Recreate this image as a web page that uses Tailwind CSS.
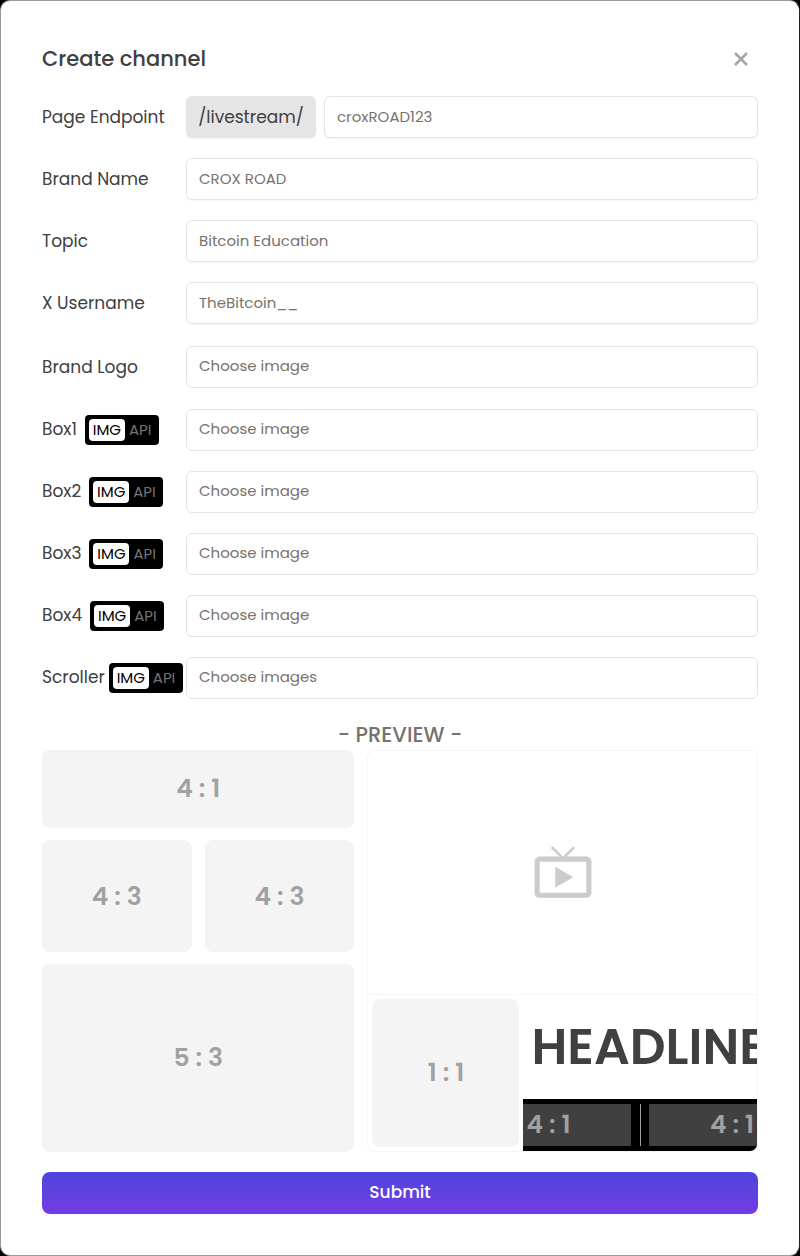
<!DOCTYPE html>
<html lang="en">

<head>
    <meta charset="UTF-8">
    <meta name="viewport" content="width=device-width, initial-scale=1.0">
    <title>Create channel</title>
    <script src="https://cdn.jsdelivr.net/npm/@tailwindcss/browser@4"></script>
</head>

<body class="bg-black font-['Poppins','Inter',sans-serif] text-neutral-700">
    <!--Modal-->
    <main class="min-h-screen bg-white border border-[#999] border-r-[#222] rounded-[10px] px-[41px] pt-[40px] pb-[40px]">
        <div class="flex items-center justify-between h-9">
            <h1 class="text-[21px] font-medium">Create channel</h1>
            <button type="button" aria-label="Close" class="p-2 text-[#a6a6a6]">
                <svg class="w-[18px] h-[18px]" viewBox="0 0 18 18" fill="none" stroke="currentColor" stroke-width="2.6">
                    <path d="M3 3l12 12M15 3L3 15" />
                </svg>
            </button>
        </div>

        <form class="mt-[19px]">
            <!--Text fields-->
            <div class="space-y-5">
                <div class="flex items-center">
                    <label for="endpoint" class="w-36 shrink-0 pt-0.5 text-[17px]">Page Endpoint</label>
                    <span class="flex items-center justify-center w-[130px] h-[42px] mr-2 pt-0.5 shrink-0 rounded-md bg-[#e5e5e5] text-[17px] shadow-xs">/livestream/</span>
                    <input type="text" id="endpoint" placeholder="croxROAD123" class="grow min-w-0 h-[42px] px-3 pb-0.5 rounded-md border border-neutral-200 shadow-xs text-[15px] placeholder:text-stone-500" />
                </div>
                <div class="flex items-center">
                    <label for="brand" class="w-36 shrink-0 pt-0.5 text-[17px]">Brand Name</label>
                    <input type="text" id="brand" placeholder="CROX ROAD" class="grow min-w-0 h-[42px] px-3 pb-0.5 rounded-md border border-neutral-200 shadow-xs text-[15px] placeholder:text-stone-500" />
                </div>
                <div class="flex items-center">
                    <label for="topic" class="w-36 shrink-0 pt-0.5 text-[17px]">Topic</label>
                    <input type="text" id="topic" placeholder="Bitcoin Education" class="grow min-w-0 h-[42px] px-3 pb-0.5 rounded-md border border-neutral-200 shadow-xs text-[15px] placeholder:text-stone-500" />
                </div>
                <div class="flex items-center">
                    <label for="username" class="w-36 shrink-0 pt-0.5 text-[17px]">X Username</label>
                    <input type="text" id="username" placeholder="TheBitcoin__" class="grow min-w-0 h-[42px] px-3 pb-0.5 rounded-md border border-neutral-200 shadow-xs text-[15px] placeholder:text-stone-500" />
                </div>
            </div>

            <!--Logo-->
            <div class="flex items-center mt-[22px]">
                <label for="logo" class="w-36 shrink-0 pt-0.5 text-[17px]">Brand Logo</label>
                <label class="relative flex items-center grow h-[42px] px-3 pb-0.5 rounded-md border border-neutral-200 text-[15px] text-stone-500">
                    <input type="file" id="logo" class="sr-only" />Choose image
                </label>
            </div>

            <!--Boxes, image or API-->
            <div class="mt-[21px] space-y-5">
                <div class="flex items-center">
                    <div class="flex items-center gap-2 w-36 shrink-0">
                        <label for="box1" class="text-[17px]">Box1</label>
                        <div class="flex items-center w-[74px] h-[30px] p-1 gap-1 rounded bg-black text-[15px]">
                            <button type="button" class="w-9 h-[22px] rounded bg-white text-black leading-[22px]">IMG</button>
                            <button type="button" class="text-neutral-500 leading-[22px]">API</button>
                        </div>
                    </div>
                    <label class="relative flex items-center grow h-[42px] px-3 pb-0.5 rounded-md border border-neutral-200 text-[15px] text-stone-500">
                        <input type="file" id="box1" class="sr-only" />Choose image
                    </label>
                </div>
                <div class="flex items-center">
                    <div class="flex items-center gap-2 w-36 shrink-0">
                        <label for="box2" class="text-[17px]">Box2</label>
                        <div class="flex items-center w-[74px] h-[30px] p-1 gap-1 rounded bg-black text-[15px]">
                            <button type="button" class="w-9 h-[22px] rounded bg-white text-black leading-[22px]">IMG</button>
                            <button type="button" class="text-neutral-500 leading-[22px]">API</button>
                        </div>
                    </div>
                    <label class="relative flex items-center grow h-[42px] px-3 pb-0.5 rounded-md border border-neutral-200 text-[15px] text-stone-500">
                        <input type="file" id="box2" class="sr-only" />Choose image
                    </label>
                </div>
                <div class="flex items-center">
                    <div class="flex items-center gap-2 w-36 shrink-0">
                        <label for="box3" class="text-[17px]">Box3</label>
                        <div class="flex items-center w-[74px] h-[30px] p-1 gap-1 rounded bg-black text-[15px]">
                            <button type="button" class="w-9 h-[22px] rounded bg-white text-black leading-[22px]">IMG</button>
                            <button type="button" class="text-neutral-500 leading-[22px]">API</button>
                        </div>
                    </div>
                    <label class="relative flex items-center grow h-[42px] px-3 pb-0.5 rounded-md border border-neutral-200 text-[15px] text-stone-500">
                        <input type="file" id="box3" class="sr-only" />Choose image
                    </label>
                </div>
                <div class="flex items-center">
                    <div class="flex items-center gap-2 w-36 shrink-0">
                        <label for="box4" class="text-[17px]">Box4</label>
                        <div class="flex items-center w-[74px] h-[30px] p-1 gap-1 rounded bg-black text-[15px]">
                            <button type="button" class="w-9 h-[22px] rounded bg-white text-black leading-[22px]">IMG</button>
                            <button type="button" class="text-neutral-500 leading-[22px]">API</button>
                        </div>
                    </div>
                    <label class="relative flex items-center grow h-[42px] px-3 pb-0.5 rounded-md border border-neutral-200 text-[15px] text-stone-500">
                        <input type="file" id="box4" class="sr-only" />Choose image
                    </label>
                </div>
                <div class="flex items-center">
                    <div class="flex items-center gap-1 w-36 shrink-0">
                        <label for="scroller" class="text-[17px]">Scroller</label>
                        <div class="flex items-center w-[74px] h-[30px] p-1 gap-1 rounded bg-black text-[15px]">
                            <button type="button" class="w-9 h-[22px] rounded bg-white text-black leading-[22px]">IMG</button>
                            <button type="button" class="text-neutral-500 leading-[22px]">API</button>
                        </div>
                    </div>
                    <label class="relative flex items-center grow h-[42px] px-3 pb-0.5 rounded-md border border-neutral-200 text-[15px] text-stone-500">
                        <input type="file" id="scroller" multiple class="sr-only" />Choose images
                    </label>
                </div>
            </div>

            <!--Preview-->
            <h2 class="mt-5 h-[31px] leading-8 text-center text-[21px] font-medium text-stone-500">- PREVIEW -</h2>
            <div class="grid grid-cols-[4fr_5fr] gap-[13px] text-[25px] font-semibold text-neutral-400">
                <div class="grid grid-cols-2 gap-x-[13px] gap-y-3 content-start">
                    <div class="col-span-2 flex items-center justify-center aspect-[4/1] rounded-lg bg-[#f4f4f4]">4 : 1</div>
                    <div class="flex items-center justify-center aspect-[4/3] rounded-lg bg-[#f4f4f4]">4 : 3</div>
                    <div class="flex items-center justify-center aspect-[4/3] rounded-lg bg-[#f4f4f4]">4 : 3</div>
                    <div class="col-span-2 flex items-center justify-center aspect-[5/3] rounded-lg bg-[#f4f4f4]">5 : 3</div>
                </div>
                <div class="flex flex-col min-w-0 rounded-lg border border-neutral-100 overflow-hidden">
                    <div class="grow flex items-center justify-center border-b border-neutral-100">
                        <svg class="w-[62px] h-[62px] text-[#cccccc]" viewBox="0 0 24 24" fill="currentColor">
                            <path d="M21 6h-7.59l3.29-3.29L16 2l-4 4-4-4-.71.71L10.59 6H3c-1.1 0-2 .89-2 2v12c0 1.1.9 2 2 2h18c1.1 0 2-.9 2-2V8c0-1.11-.9-2-2-2zm0 14H3V8h18v12zM9 10v8l7-4z" />
                        </svg>
                    </div>
                    <div class="flex h-[156px]">
                        <div class="flex items-center justify-center w-[147px] h-[148px] m-1 shrink-0 rounded-lg bg-[#f4f4f4]">1 : 1</div>
                        <div class="flex flex-col grow min-w-0">
                            <div class="grow flex items-center pl-2 overflow-hidden text-[50px] text-neutral-700 whitespace-nowrap">HEADLINE</div>
                            <!--Ticker strip-->
                            <div class="flex justify-between h-[52px] py-[5px] bg-black overflow-hidden">
                                <div class="flex items-center w-[108px] pl-[3px] bg-neutral-700 whitespace-nowrap">4 : 1</div>
                                <div class="w-px bg-neutral-400"></div>
                                <div class="flex items-center justify-end w-[108px] pr-[3px] bg-neutral-700 whitespace-nowrap">4 : 1</div>
                            </div>
                        </div>
                    </div>
                </div>
            </div>

            <button type="submit" class="w-full h-[42px] mt-5 rounded-lg bg-linear-to-b from-[#4b45dd] to-[#753be2] text-[17px] font-medium text-white">Submit</button>
        </form>
    </main>
</body>

</html>
